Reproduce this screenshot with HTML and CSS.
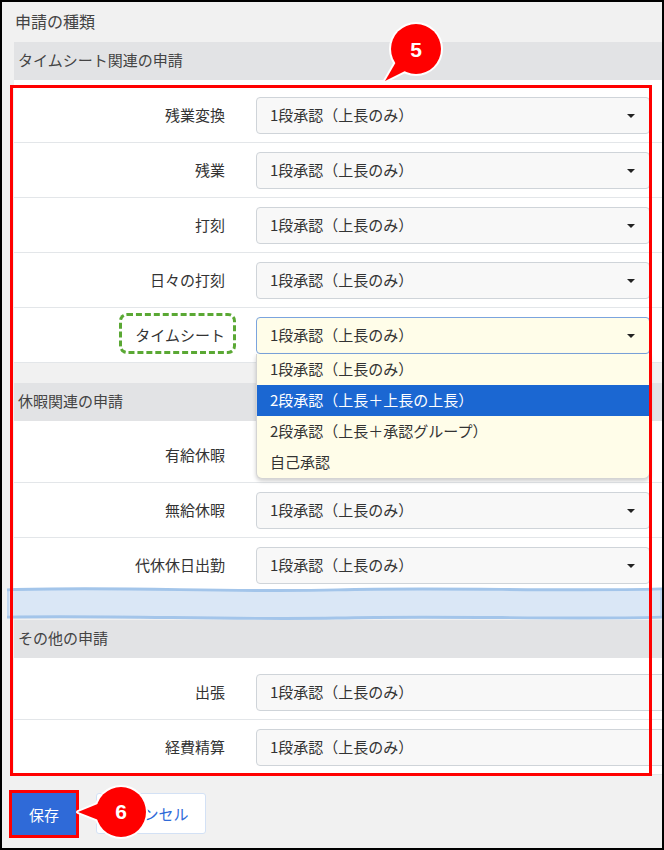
FILE: index.html
```html
<!DOCTYPE html>
<html lang="ja">

<head>
    <meta charset="UTF-8">
    <meta name="viewport" content="width=device-width, initial-scale=1.0">
    <title>申請の種類</title>
    <link rel="stylesheet" href="styles.css">
</head>

<body>
    <div class="page">
        <div class="title">申請の種類</div>

        <div class="section">
            <div class="section-head">タイムシート関連の申請</div>
            <div class="rows rows-first">
                <div class="row">
                    <div class="label">残業変換</div>
                    <div class="select">1段承認（上長のみ）</div>
                </div>
                <div class="row">
                    <div class="label">残業</div>
                    <div class="select">1段承認（上長のみ）</div>
                </div>
                <div class="row">
                    <div class="label">打刻</div>
                    <div class="select">1段承認（上長のみ）</div>
                </div>
                <div class="row">
                    <div class="label">日々の打刻</div>
                    <div class="select">1段承認（上長のみ）</div>
                </div>
                <div class="row">
                    <div class="label"><span class="marked">タイムシート</span></div>
                    <div class="select-wrap">
                        <div class="select focused">1段承認（上長のみ）</div>
                        <ul class="menu">
                            <li>1段承認（上長のみ）</li>
                            <li class="active">2段承認（上長＋上長の上長）</li>
                            <li>2段承認（上長＋承認グループ）</li>
                            <li>自己承認</li>
                        </ul>
                    </div>
                </div>
            </div>
        </div>

        <div class="section">
            <div class="section-head">休暇関連の申請</div>
            <div class="rows">
                <div class="row">
                    <div class="label">有給休暇</div>
                    <div class="select">1段承認（上長のみ）</div>
                </div>
                <div class="row">
                    <div class="label">無給休暇</div>
                    <div class="select">1段承認（上長のみ）</div>
                </div>
                <div class="row">
                    <div class="label">代休休日出勤</div>
                    <div class="select">1段承認（上長のみ）</div>
                </div>
            </div>
        </div>

        <div class="break">
            <svg viewBox="0 0 655 35" preserveAspectRatio="none">
                <path d="M0,4 C110,0 220,7 330,4 C440,1 550,6 655,3 L655,32 C550,35 440,30 330,33 C220,35 110,30 0,32 Z" fill="#dae7f6" />
                <path d="M1,4 L1,32 M654,3 L654,32" stroke="#c2d8f0" stroke-width="2" />
                <path d="M0,4 C110,0 220,7 330,4 C440,1 550,6 655,3" stroke="#a3c5ea" stroke-width="3" fill="none" />
                <path d="M0,32 C110,30 220,35 330,33 C440,30 550,35 655,32" stroke="#a3c5ea" stroke-width="3" fill="none" />
            </svg>
        </div>

        <div class="section">
            <div class="section-head">その他の申請</div>
            <div class="rows">
                <div class="row">
                    <div class="label">出張</div>
                    <div class="select wide">1段承認（上長のみ）</div>
                </div>
                <div class="row">
                    <div class="label">経費精算</div>
                    <div class="select wide">1段承認（上長のみ）</div>
                </div>
            </div>
        </div>

        <div class="actions">
            <button class="btn btn-primary">保存</button>
            <button class="btn btn-cancel">キャンセル</button>
        </div>

        <!-- annotations -->
        <div class="frame-red"></div>

        <svg class="callout callout-5" width="70" height="70" viewBox="0 0 70 70">
            <g fill="#fff" stroke="#fff" stroke-width="4" stroke-linejoin="round">
                <circle cx="36" cy="33" r="25" />
                <polygon points="16,46 27,54 5,65" />
            </g>
            <circle cx="36" cy="33" r="25" fill="#f00" />
            <polygon points="16,46 27,54 5,65" fill="#f00" />
            <text x="36" y="41" text-anchor="middle" class="callout-num">5</text>
        </svg>

        <svg class="callout callout-6" width="80" height="64" viewBox="0 0 80 64">
            <g fill="#fff" stroke="#fff" stroke-width="4" stroke-linejoin="round">
                <circle cx="49" cy="32" r="25" />
                <polygon points="28,23 29,41 6,32" />
            </g>
            <circle cx="49" cy="32" r="25" fill="#f00" />
            <polygon points="28,23 29,41 6,32" fill="#f00" />
            <text x="49" y="39" text-anchor="middle" class="callout-num">6</text>
        </svg>
    </div>
</body>

</html>
```

FILE: styles.css
```css
body {
    margin: 0;
    font-family: "Noto Sans CJK JP", "Liberation Sans", sans-serif;
    color: #333;
}

.page {
    position: relative;
    box-sizing: border-box;
    width: 664px;
    height: 850px;
    border: 2px solid #000;
    background-color: #f1f1f1;
    overflow: hidden;
}

.title {
    height: 40px;
    line-height: 38px;
    padding-left: 13px;
    font-size: 16px;
    color: #444;
}

.section {
    margin-left: 12px;
}

.section + .section {
    margin-top: 20px;
}

.section-head {
    height: 38px;
    line-height: 36px;
    padding-left: 4px;
    background-color: #e2e3e5;
    font-size: 15px;
    color: #444;
}

.rows {
    background-color: #fff;
    padding-top: 7px;
}

.rows-first {
    padding-top: 8px;
}

.row {
    display: flex;
    align-items: center;
    box-sizing: border-box;
    height: 55px;
    border-bottom: 1px solid #e3e6e9;
}

.label {
    flex-shrink: 0;
    width: 211px;
    margin-right: 31px;
    padding-bottom: 2px;
    text-align: right;
    font-size: 15px;
}

.marked {
    position: relative;
}

.marked::before {
    content: "";
    position: absolute;
    top: -11px;
    bottom: -9px;
    left: -16px;
    right: -11px;
    border: 3px dashed #5aa834;
    border-radius: 8px;
}

.select-wrap {
    position: relative;
    flex-shrink: 0;
    width: 394px;
}

.select {
    position: relative;
    flex-shrink: 0;
    box-sizing: border-box;
    width: 394px;
    height: 37px;
    line-height: 33px;
    padding-left: 13px;
    border: 1px solid #cfd4d9;
    border-radius: 4px;
    background-color: #f8f8f8;
    font-size: 15px;
}

.select::after {
    content: "";
    position: absolute;
    right: 14px;
    top: 16px;
    border-left: 4px solid transparent;
    border-right: 4px solid transparent;
    border-top: 4px solid #222;
}

.select.focused {
    background-color: #fffde9;
    border-color: #7ba4de;
}

.select.wide {
    width: 430px;
}

.menu {
    position: absolute;
    z-index: 3;
    top: 37px;
    left: 0;
    width: 394px;
    box-sizing: border-box;
    margin: 0;
    padding: 0;
    list-style: none;
    background-color: #fffde9;
    border: 1px solid #d4d4d4;
    border-top: none;
    border-radius: 0 0 6px 6px;
    box-shadow: 0 2px 4px rgba(0, 0, 0, 0.2);
    overflow: hidden;
}

.menu li {
    height: 31px;
    line-height: 29px;
    padding-left: 13px;
    font-size: 15px;
}

.menu li.active {
    background-color: #1b67d2;
    color: #fff;
}

.break {
    position: relative;
    z-index: 2;
    width: 655px;
    height: 34px;
    margin: -7px 0 0 5px;
}

.break svg {
    display: block;
    width: 100%;
    height: 100%;
}

.actions {
    display: flex;
    gap: 20px;
    margin-top: 18px;
    padding-left: 10px;
}

.btn {
    font-family: "Noto Sans CJK JP", "Liberation Sans", sans-serif;
    font-size: 15px;
    height: 42px;
    border-radius: 3px;
    cursor: pointer;
}

.btn-primary {
    width: 64px;
    border: none;
    border-radius: 0;
    background-color: #2f6ad8;
    color: #fff;
    outline: 3px solid #f00;
}

.btn-cancel {
    width: 110px;
    height: 41px;
    border: 1px solid #d3e1f5;
    background-color: #fff;
    color: #2f6ad8;
}

.frame-red {
    position: absolute;
    z-index: 5;
    left: 8px;
    top: 83px;
    width: 642px;
    height: 691px;
    box-sizing: border-box;
    border: 3px solid #f00;
}

.callout {
    position: absolute;
    z-index: 6;
}

.callout-5 {
    left: 378px;
    top: 14px;
}

.callout-6 {
    left: 70px;
    top: 778px;
}

.callout-num {
    fill: #fff;
    font-family: "Liberation Sans", sans-serif;
    font-weight: bold;
    font-size: 21px;
}
```
